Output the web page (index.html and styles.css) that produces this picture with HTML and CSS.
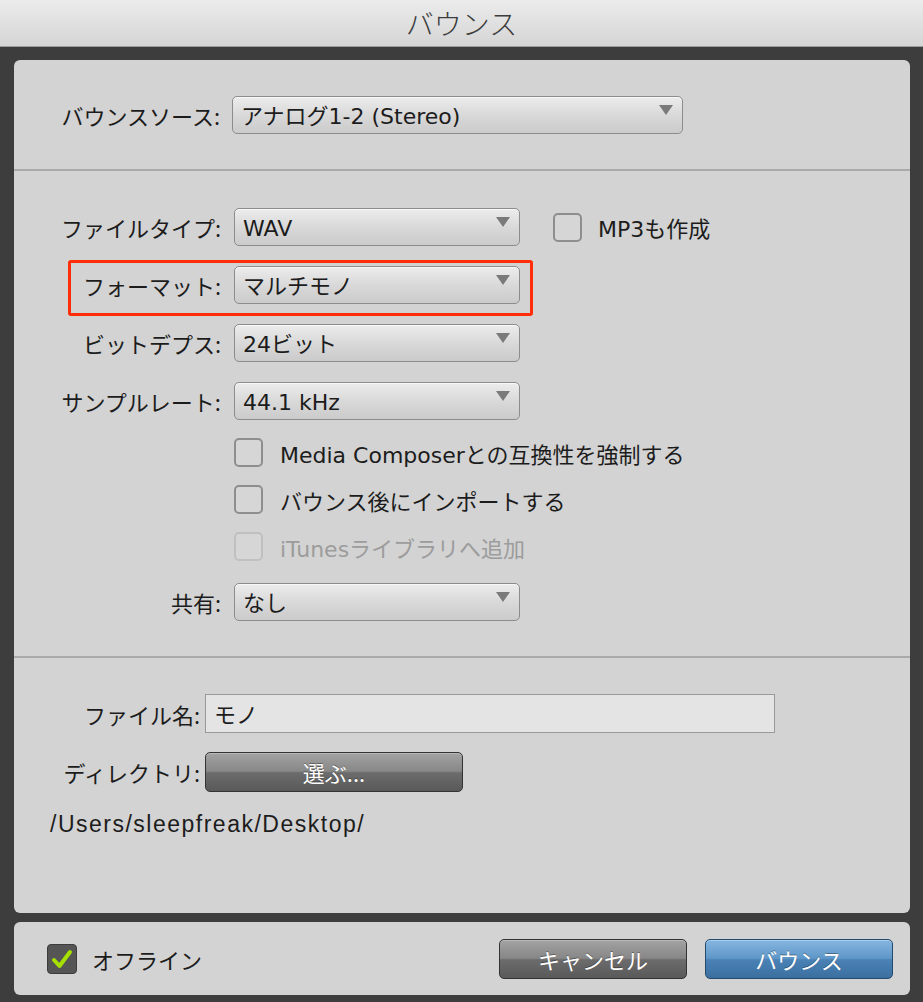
FILE: index.html
```html
<!DOCTYPE html>
<html lang="ja">
<head>
    <meta charset="UTF-8">
    <meta name="viewport" content="width=device-width, initial-scale=1.0">
    <title>バウンス</title>
    <link rel="stylesheet" href="styles.css">
</head>
<body>
    <div class="window">
        <!-- Title bar -->
        <div class="titlebar">バウンス</div>

        <div class="frame">
            <div class="panel">
                <!-- Source -->
                <div class="section source">
                    <div class="row">
                        <span class="label">バウンスソース:</span>
                        <div class="select wide">アナログ1-2 (Stereo)</div>
                    </div>
                </div>

                <!-- File options -->
                <div class="section options">
                    <div class="row">
                        <span class="label">ファイルタイプ:</span>
                        <div class="select">WAV</div>
                        <div class="check mp3"><span class="box"></span>MP3も作成</div>
                    </div>
                    <div class="row marked">
                        <span class="label">フォーマット:</span>
                        <div class="select">マルチモノ</div>
                    </div>
                    <div class="row">
                        <span class="label">ビットデプス:</span>
                        <div class="select">24ビット</div>
                    </div>
                    <div class="row">
                        <span class="label">サンプルレート:</span>
                        <div class="select">44.1 kHz</div>
                    </div>
                    <div class="row check-row">
                        <span class="label"></span>
                        <div class="check"><span class="box"></span>Media Composerとの互換性を強制する</div>
                    </div>
                    <div class="row check-row">
                        <span class="label"></span>
                        <div class="check"><span class="box"></span>バウンス後にインポートする</div>
                    </div>
                    <div class="row check-row">
                        <span class="label"></span>
                        <div class="check disabled"><span class="box"></span>iTunesライブラリへ追加</div>
                    </div>
                    <div class="row share">
                        <span class="label">共有:</span>
                        <div class="select">なし</div>
                    </div>
                </div>

                <!-- File name and directory -->
                <div class="section file">
                    <div class="row">
                        <span class="label">ファイル名:</span>
                        <div class="field">モノ</div>
                    </div>
                    <div class="row">
                        <span class="label">ディレクトリ:</span>
                        <div class="button gray dir">選ぶ...</div>
                    </div>
                    <div class="path">/Users/sleepfreak/Desktop/</div>
                </div>
            </div>

            <!-- Footer -->
            <div class="footer">
                <div class="offline">
                    <span class="tick">
                        <svg width="22" height="22" viewBox="0 0 22 22">
                            <path d="M3 12 L8.5 18 L19 4" fill="none" stroke="#a6e000" stroke-width="4" stroke-linecap="round" stroke-linejoin="round"/>
                        </svg>
                    </span>
                    オフライン
                </div>
                <div class="actions">
                    <div class="button gray">キャンセル</div>
                    <div class="button blue">バウンス</div>
                </div>
            </div>
        </div>
    </div>
</body>
</html>
```

FILE: styles.css
```css
body {
    margin: 0;
    background-color: #3d3d3d;
    font-family: "DejaVu Sans", "Noto Sans CJK JP", sans-serif;
    font-size: 22px;
    color: #1c1c1c;
    overflow: hidden;
}

.window {
    width: 923px;
    height: 1002px;
    display: flex;
    flex-direction: column;
}

.titlebar {
    height: 46px;
    line-height: 46px;
    text-align: center;
    font-family: "Noto Sans CJK JP", sans-serif;
    font-size: 28px;
    font-weight: 300;
    color: #3c3c3c;
    background: linear-gradient(#ececec, #d5d5d5);
    border-bottom: 1px solid #9c9c9c;
}

.frame {
    flex: 1;
    display: flex;
    flex-direction: column;
    gap: 9px;
    padding: 13px 13px 7px 14px;
}

.panel {
    flex: 1;
    background-color: #d3d3d3;
    border-radius: 6px;
    display: flex;
    flex-direction: column;
}

.section {
    border-top: 2px solid #aaaaaa;
}

.section.source {
    border-top: none;
    padding: 36px 0 35px;
}

.section.options {
    padding: 37px 0 35px;
    display: flex;
    flex-direction: column;
    gap: 20px;
}

.section.file {
    flex: 1;
    padding: 36px 0 0;
}

.row {
    display: flex;
    align-items: center;
}

.label {
    width: 207px;
    margin-right: 13px;
    text-align: right;
    white-space: nowrap;
    font-family: "Noto Sans CJK JP", sans-serif;
}

.source .label {
    width: 206px;
    margin-right: 12px;
}

/* Popup menus */
.select {
    position: relative;
    width: 270px;
    height: 36px;
    line-height: 40px;
    padding-left: 8px;
    padding-right: 6px;
    border: 1px solid #8c8c8c;
    border-radius: 5px;
    background: linear-gradient(#ececec, #d9d9d9 50%, #cbcbcb);
    box-shadow: inset 0 1px 0 #f8f8f8;
    white-space: nowrap;
    overflow: hidden;
}

.select.wide {
    width: 435px;
}

.select::after {
    content: "";
    position: absolute;
    right: 9px;
    top: 8px;
    border-left: 7px solid transparent;
    border-right: 7px solid transparent;
    border-top: 10px solid #7a7a7a;
}

/* Red annotation frame */
.marked {
    position: relative;
}

.marked::after {
    content: "";
    position: absolute;
    left: 54px;
    top: -6px;
    width: 459px;
    height: 50px;
    border: 3px solid #ff2d0a;
    border-radius: 3px;
    pointer-events: none;
}

/* Checkboxes */
.check {
    display: flex;
    align-items: center;
    white-space: nowrap;
}

.check .box {
    width: 25px;
    height: 25px;
    border: 2px solid #8e8e8e;
    border-radius: 5px;
    margin-right: 17px;
    background-color: #d6d6d6;
}

.check.mp3 {
    margin-left: 33px;
}

.check.mp3 .box {
    margin-right: 16px;
}

.check-row {
    height: 29px;
    margin-top: -2px;
}

.check.disabled {
    color: #9c9c9c;
}

.check.disabled .box {
    border-color: #c0c0c0;
}

.share {
    margin-top: 2px;
}

/* File section */
.file .label {
    width: 186px;
    margin-right: 5px;
}

.file .row {
    margin-bottom: 19px;
}

.field {
    width: 560px;
    height: 37px;
    line-height: 37px;
    padding-left: 8px;
    border: 1px solid #999;
    background-color: #e4e4e4;
    font-family: "Noto Sans CJK JP", sans-serif;
}

.path {
    padding-left: 36px;
    margin-top: 7px;
    font-family: "Liberation Sans", sans-serif;
    font-size: 23px;
    letter-spacing: 1.5px;
}

/* Buttons */
.button {
    height: 38px;
    line-height: 38px;
    text-align: center;
    color: #fff;
    font-family: "Noto Sans CJK JP", sans-serif;
    border-radius: 5px;
    text-shadow: 0 -1px 0 rgba(0, 0, 0, 0.35);
}

.button.gray {
    border: 1px solid #333;
    background: linear-gradient(#a3a3a3, #878787 48%, #6c6c6c 52%, #595959);
    box-shadow: inset 0 1px 0 #b8b8b8;
}

.button.blue {
    border: 1px solid #264a6b;
    background: linear-gradient(#86b6e0, #5f97c8 48%, #4a82b6 52%, #3b6f9f);
    box-shadow: inset 0 1px 0 #a4cdef;
}

.button.dir {
    width: 256px;
}

.footer {
    height: 73px;
    background-color: #d3d3d3;
    border-radius: 6px;
    display: flex;
    align-items: center;
    justify-content: space-between;
    padding: 0 17px 0 33px;
}

.offline {
    display: flex;
    align-items: center;
    font-family: "Noto Sans CJK JP", sans-serif;
}

.tick {
    width: 28px;
    height: 28px;
    margin-right: 15px;
    border: 1px solid #3c3c3c;
    border-radius: 4px;
    background-color: #555;
    display: flex;
    align-items: center;
    justify-content: center;
}

.actions {
    display: flex;
    gap: 18px;
}

.actions .button {
    width: 186px;
}
```
